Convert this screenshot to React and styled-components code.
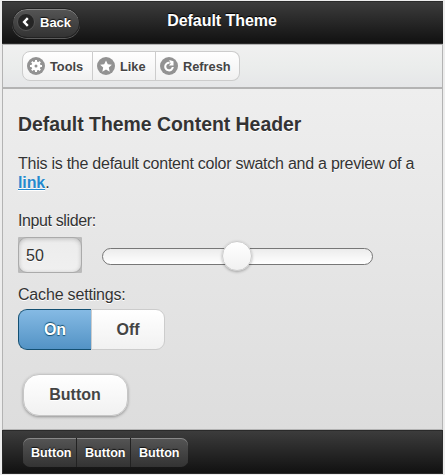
import React from "react";
import styled, { createGlobalStyle, css } from "styled-components";

const Global = createGlobalStyle`
  * { box-sizing: border-box; }
  html, body { margin: 0; height: 475px; overflow: hidden; background: #ededed; }
  body { font-family: "Liberation Sans", Arial, sans-serif; font-size: 16px; color: #333; }
  button, input { font-family: inherit; margin: 0; padding: 0; }
`;

const Page = styled.div`
  width: 441px;
  height: 473px;
  margin: 1px 2px 1px 2px;
  display: flex;
  flex-direction: column;
`;

const Header = styled.header`
  height: 43px;
  flex: none;
  display: grid;
  grid-template-columns: 90px 1fr 91px;
  border: 1px solid #2a2a2a;
  border-left: 0;
  border-right: 0;
  background: linear-gradient(#3c3c3c, #111);
`;

const Title = styled.h1`
  margin: 0;
  padding-top: 9px;
  font-size: 16px;
  line-height: 20px;
  text-align: center;
  color: #fff;
  text-shadow: 0 -1px 1px #000;
  letter-spacing: -0.04px;
`;

const BackButton = styled.button`
  width: 68px;
  height: 30px;
  margin: 6px 0 0 10px;
  display: flex;
  align-items: center;
  gap: 5px;
  padding: 0 0 2px 4px;
  border: 1px solid #222;
  border-radius: 15px;
  background: linear-gradient(#555, #333);
  box-shadow: inset 0 1px 0 rgba(255, 255, 255, 0.3), 0 1px 0 rgba(255, 255, 255, 0.3);
  color: #fff;
  font-size: 13px;
  font-weight: bold;
  text-shadow: 0 -1px 1px #111;
`;

const Icon = styled.svg`
  width: 18px;
  height: 18px;
  flex: none;
`;

const Toolbar = styled.nav`
  height: 45px;
  flex: none;
  display: flex;
  padding: 6px 0 0 19px;
  border: 1px solid #b3b3b3;
  border-bottom-width: 2px;
  background: linear-gradient(#f0f0f0, #ebedec 50%, #e5e6e8);
`;

const ToolButton = styled.button`
  width: ${(p) => p.$width}px;
  height: 30px;
  display: flex;
  align-items: center;
  gap: 5px;
  padding-left: 4px;
  border: 1px solid #ccc;
  border-left-width: ${(p) => (p.$first ? 1 : 0)}px;
  border-radius: ${(p) => (p.$first ? "8px 0 0 8px" : p.$last ? "0 8px 8px 0" : 0)};
  background: linear-gradient(#fff, #f1f1f1);
  color: #444;
  font-size: 12.8px;
  font-weight: bold;
  text-shadow: 0 1px 0 #fff;
`;

const Content = styled.main`
  flex: 1;
  display: flex;
  flex-direction: column;
  align-items: flex-start;
  padding: 23px 15px 0;
  border: 1px solid #b3b3b3;
  border-top: 0;
  background: linear-gradient(#eee, #ddd);
  text-shadow: 0 1px 0 #fff;
`;

const Heading = styled.h2`
  margin: 0;
  font-size: 19.4px;
  line-height: 24px;
`;

const Paragraph = styled.p`
  margin: 18px 0 0;
  line-height: 19px;
  width: 405px;
  letter-spacing: -0.25px;
`;

const Link = styled.a`
  color: #2489ce;
  font-weight: bold;
  text-decoration: underline;
  letter-spacing: -0.1px;
`;

const Label = styled.label`
  margin-top: ${(p) => p.$top}px;
  line-height: 20px;
  letter-spacing: ${(p) => p.$tracking}px;
`;

const SliderRow = styled.div`
  display: flex;
  align-items: center;
  gap: 20px;
  height: 38px;
  margin-top: 5px;
`;

const InputFrame = styled.div`
  width: 64px;
  height: 36px;
  padding: 0;
  background: #bbb;
  border-radius: 1px;
`;

const NumberInput = styled.input`
  display: block;
  width: 64px;
  height: 36px;
  padding: 1px 0 0 7px;
  border: 1px solid #aaa;
  border-radius: 9px;
  background: linear-gradient(#ececec, #f0f0f0);
  box-shadow: inset 0 1px 4px rgba(0, 0, 0, 0.2);
  color: #333;
  font-size: 16px;
  text-shadow: 0 1px 0 #fff;
  outline: 0;
`;

const Track = styled.div`
  width: 271px;
  height: 17px;
  display: flex;
  align-items: center;
  justify-content: center;
  margin-top: 2px;
  border: 1px solid #777;
  border-radius: 9px;
  background: linear-gradient(#ececec, #fff);
`;

const Thumb = styled.div`
  width: 30px;
  height: 30px;
  flex: none;
  margin-right: 2px;
  border: 1px solid #ccc;
  border-radius: 50%;
  background: linear-gradient(#fff, #f1f1f1);
  box-shadow: 0 1px 3px rgba(0, 0, 0, 0.3);
`;

const Segments = styled.div`
  display: flex;
  margin-top: 4px;
`;

const onStyle = css`
  border-color: #145072;
  border-right: 0;
  border-radius: 9px 0 0 9px;
  background: linear-gradient(#85bae4, #5393c5);
  color: #fff;
  text-shadow: 0 1px 1px #145072, 0 -1px 1px #145072;
`;

const Segment = styled.button`
  width: ${(p) => (p.$on ? 73 : 74)}px;
  height: 41px;
  border: 1px solid #ccc;
  border-radius: 0 9px 9px 0;
  background: linear-gradient(#fff, #f1f1f1);
  color: #444;
  font-size: 16px;
  font-weight: bold;
  text-shadow: 0 1px 0 #fff;
  ${(p) => p.$on && onStyle}
`;

const LargeButton = styled.button`
  width: 105px;
  height: 42px;
  margin: 24px 0 0 4.5px;
  border: 1px solid #c6c6c6;
  border-radius: 16px;
  background: linear-gradient(#fff, #f1f1f1);
  box-shadow: 0 1px 3px rgba(0, 0, 0, 0.35);
  color: #444;
  font-size: 16px;
  font-weight: bold;
  text-shadow: 0 1px 0 #fff;
`;

const Footer = styled.footer`
  height: 44px;
  flex: none;
  display: flex;
  padding: 7px 0 0 20px;
  border: 1px solid #2a2a2a;
  background: linear-gradient(#3c3c3c, #111);
`;

const FooterButton = styled.button`
  width: ${(p) => (p.$last ? 57 : 54)}px;
  height: 29px;
  border: 0;
  border-right: ${(p) => (p.$last ? 0 : 1)}px solid #222;
  border-radius: ${(p) => (p.$first ? "7px 0 0 7px" : p.$last ? "0 7px 7px 0" : 0)};
  background: linear-gradient(#555, #333);
  box-shadow: inset 0 1px 0 rgba(255, 255, 255, 0.3);
  color: #fff;
  font-size: 12.6px;
  font-weight: bold;
  text-shadow: 0 -1px 1px #111;
  text-align: left;
  padding: 0 0 0 8px;
`;

const BackIcon = () => (
  <Icon viewBox="0 0 18 18">
    <circle cx="9" cy="9" r="8.5" fill="#252525" stroke="#555" />
    <path d="M10.8 5.2 7.1 9l3.7 3.8" fill="none" stroke="#fff" strokeWidth="2.4" />
  </Icon>
);

const GearIcon = () => (
  <Icon viewBox="0 0 18 18">
    <circle cx="9" cy="9" r="9" fill="#929292" />
    <circle cx="9" cy="9" r="4.6" fill="#fff" />
    <path
      d="M9 3v12M3 9h12M4.8 4.8l8.4 8.4M13.2 4.8l-8.4 8.4"
      stroke="#fff"
      strokeWidth="2"
    />
    <circle cx="9" cy="9" r="1.5" fill="#929292" />
  </Icon>
);

const StarIcon = () => (
  <Icon viewBox="0 0 18 18">
    <circle cx="9" cy="9" r="9" fill="#929292" />
    <path
      d="M9 3.5l1.8 3.8 4.1.4-3.1 2.8.9 4.2L9 12.6l-3.7 2.1.9-4.2-3.1-2.8 4.1-.4z"
      fill="#fff"
    />
  </Icon>
);

const RefreshIcon = () => (
  <Icon viewBox="0 0 18 18">
    <circle cx="9" cy="9" r="9" fill="#929292" />
    <path d="M9.6 5.8a3.8 3.8 0 1 0 3.2 4.2" fill="none" stroke="#fff" strokeWidth="2.1" />
    <path d="M9.2 3 13.5 4.2V8.4H8.9L10.6 6.6z" fill="#fff" />
  </Icon>
);

export default function App() {
  return (
    <>
      <Global />
      <Page>
        <Header>
          <BackButton><BackIcon />Back</BackButton>
          <Title>Default Theme</Title>
        </Header>
        <Toolbar>
          <ToolButton $first $width={71}><GearIcon />Tools</ToolButton>
          <ToolButton $width={63}><StarIcon />Like</ToolButton>
          <ToolButton $last $width={84}><RefreshIcon />Refresh</ToolButton>
        </Toolbar>
        <Content>
          <Heading>Default Theme Content Header</Heading>
          <Paragraph>
            This is the default content color swatch and a preview of a <Link>link</Link>.
          </Paragraph>
          <Label $top={19} $tracking={-0.38} htmlFor="amount">Input slider:</Label>
          <SliderRow>
            <InputFrame><NumberInput id="amount" defaultValue="50" /></InputFrame>
            <Track><Thumb /></Track>
          </SliderRow>
          <Label as="div" $top={11} $tracking={-0.18}>Cache settings:</Label>
          <Segments>
            <Segment $on>On</Segment>
            <Segment>Off</Segment>
          </Segments>
          <LargeButton>Button</LargeButton>
        </Content>
        <Footer>
          <FooterButton $first>Button</FooterButton>
          <FooterButton>Button</FooterButton>
          <FooterButton $last>Button</FooterButton>
        </Footer>
      </Page>
    </>
  );
}
